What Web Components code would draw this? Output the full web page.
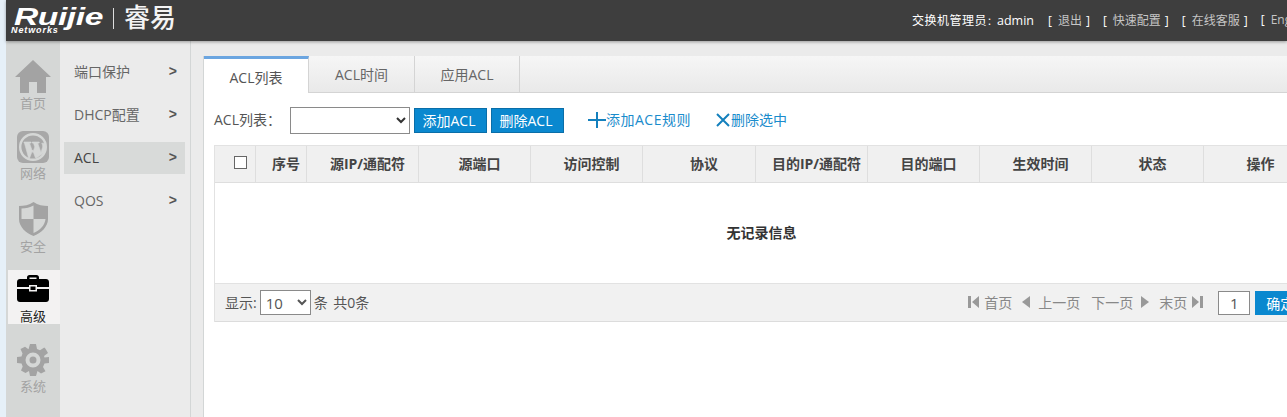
<!DOCTYPE html>
<html lang="zh">
<head>
<meta charset="utf-8">
<title>ACL</title>
<style>
html, body { margin: 0; height: 100%; overflow: hidden; background: #e6f0f8; }
body { font: 14px "Open Sans", "Noto Sans CJK SC", sans-serif; color: #555; }
</style>
</head>
<body>
<rj-app>
  <rj-header slot="header"></rj-header>
  <rj-rail slot="rail"></rj-rail>
  <rj-submenu slot="submenu"></rj-submenu>
  <rj-tabs></rj-tabs>
  <rj-toolbar></rj-toolbar>
  <rj-table></rj-table>
</rj-app>

<script>
const FONT = '"Open Sans", "Noto Sans CJK SC", sans-serif';

class RjApp extends HTMLElement {
  constructor() {
    super();
    this.attachShadow({mode: 'open'});
    this.shadowRoot.innerHTML = `
<style>
:host { display: block; height: 417px; padding-left: 6px; box-sizing: border-box; overflow: hidden; }
.shell { display: grid; grid-template-columns: 54px 130px 1fr; grid-template-rows: 41px 1fr; height: 417px; width: 1281px; }
.top { grid-column: 1 / -1; }
.main { background: #ebebeb; padding: 15px 0 0 12px; border-left: 1px solid #d3d6d6; min-width: 0; overflow: hidden; }
.page { background: #fff; border-left: 1px solid #d3d6d6; height: 100%; overflow: hidden; }
</style>
<div class="shell">
  <div class="top"><slot name="header"></slot></div>
  <slot name="rail"></slot>
  <slot name="submenu"></slot>
  <div class="main"><div class="page"><slot></slot></div></div>
</div>`;
  }
}

class RjHeader extends HTMLElement {
  constructor() {
    super();
    this.attachShadow({mode: 'open'});
    this.shadowRoot.innerHTML = `
<style>
:host { display: block; height: 41px; background: #3e3e3e; box-shadow: 0 1px 3px rgba(0,0,0,.35); position: relative; z-index: 2; overflow: hidden; color: #fff; font-family: ${FONT}; }
.bar { display: flex; align-items: center; height: 41px; width: 1400px; }
.logo { flex: none; width: 906px; display: flex; align-items: flex-start; height: 41px; box-sizing: border-box; padding-left: 5px; }
.mark { position: relative; width: 101px; height: 41px; }
.word { position: absolute; left: 3px; top: 7px; font: italic bold 24px/19px "Liberation Sans", sans-serif; letter-spacing: -.3px; color: #fff; transform: scaleX(1.4); transform-origin: 0 50%; }
.net { position: absolute; left: 0; top: 26px; font: italic bold 9px/8px "Liberation Sans", sans-serif; letter-spacing: .9px; color: #fff; }
.sep { width: 1px; height: 21px; background: #ddd; margin: 8px 0 0 1px; }
.brand { font: 500 26px/30px "Noto Sans CJK SC", sans-serif; margin: 1px 0 0 10px; color: #f4f4f4; }
.user { flex: none; font-size: 12px; display: flex; gap: 13px; white-space: nowrap; padding-bottom: 2px; }
.admin { margin-right: 1px; letter-spacing: .5px; }
.admin i { font-style: normal; font-size: 10px; letter-spacing: 0; }
.admin em { font-style: normal; font-size: 12.5px; letter-spacing: 0; }
a { color: #fff; }
a b { font-weight: 400; color: #c6c6c6; padding: 0 4px 0 6px; }
</style>
<div class="bar">
  <div class="logo">
    <div class="mark"><span class="word">Ruijie</span><span class="net">Networks</span></div>
    <div class="sep"></div>
    <div class="brand">睿易</div>
  </div>
  <div class="user">
    <span class="admin">交换机管理员<i>：</i><em>admin</em></span>
    <a>[<b>退出</b>]</a>
    <a>[<b>快速配置</b>]</a>
    <a>[<b>在线客服</b>]</a>
    <a>[<b>English</b>]</a>
  </div>
</div>`;
  }
}

const RAIL_ICONS = {
  home: '<svg width="36" height="33" viewBox="0 0 36 33"><path fill="currentColor" d="M18 0 36 17H31V33H22V22H14V33H5V17H0Z"/></svg>',
  wp: `<svg width="32" height="32" viewBox="0 0 32 32"><rect width="32" height="32" rx="6" fill="#a8a8a8"/><circle cx="16" cy="16" r="12.800" fill="none" stroke="#d5d7d6" stroke-width="2.400"/><path fill="#d5d7d6" stroke="#d5d7d6" stroke-width=".6" d="M7 11h7v1l-1.500.2 3.300 9.300 2-5.600-1.300-3.700-1.300-.2v-1h7v1l-1.500.2 3.300 9.300 1.500-5c.6-2-.2-3.300-.8-4.300h3c1.500 3 1 6-.3 9.300L19.500 27h-1L15.600 19l-3 8h-1L7.500 12.200 7 12z"/></svg>`,
  shield: '<svg width="29" height="34" viewBox="0 0 29 34"><path fill="currentColor" d="M14.500 0C19 3 24 4 29 4V17C29 25 22 31 14.500 34 7 31 0 25 0 17V4C5 4 10 3 14.500 0Z"/><path fill="#d5d7d6" d="M14.500 3.500V17H2.500V6.500C7 6.300 11 5.500 14.500 3.500ZM14.500 17H26.500C26 23.500 20.500 28.500 14.500 31Z"/></svg>',
  case: '<svg width="32" height="27" viewBox="0 0 32 27"><path fill="#000" d="M10 4V2.500C10 1 11 0 12.500 0H19.500C21 0 22 1 22 2.500V4H29C30.700 4 32 5.300 32 7V12H20V10H12V12H0V7C0 5.300 1.300 4 3 4ZM12.500 2.500V4H19.500V2.500ZM0 14H12V16.500H20V14H32V24C32 25.700 30.700 27 29 27H3C1.300 27 0 25.700 0 24ZM13.500 11.500H18.500V15H13.500Z"/></svg>',
  gear: '<svg width="32" height="32" viewBox="0 0 32 32"><path fill="currentColor" fill-rule="evenodd" d="M13 0H19L20 5 23 6.300 27.300 3.600 28.500 4.800 31 9 27 12 27.500 13.500 32 13V19L27.500 19.500 26 23 28.500 27.300 24 29.500 20.500 27 19 32H13L12 27 8.500 29 4 26.500 5.700 22.500 4.500 19.500 0 19V13L4.500 12.500 5.500 9.500 3.500 5 8 2.700 11.500 5.300ZM16 8.500A7.500 7.500 0 1 0 16 23.500 7.500 7.500 0 1 0 16 8.500ZM16 12.500A3.500 3.500 0 1 1 16 19.500 3.500 3.500 0 1 1 16 12.500Z"/></svg>'
};

class RjRail extends HTMLElement {
  constructor() {
    super();
    this.attachShadow({mode: 'open'});
    const items = [['home', '首页'], ['wp', '网络'], ['shield', '安全'], ['case', '高级', true], ['gear', '系统']];
    this.shadowRoot.innerHTML = `
<style>
:host { display: block; background: #d5d7d6; overflow: hidden; font-family: ${FONT}; }
.list { display: flex; flex-direction: column; gap: 17px; padding-top: 16px; }
.item { height: 54px; box-sizing: border-box; padding-top: 3px; display: flex; flex-direction: column; align-items: center; color: #a3a3a3; font-size: 13px; line-height: 18px; }
.item svg { display: block; }
.icon { height: 34px; margin-bottom: 1px; }
.item.on { background: #f3f2f2; color: #222; margin-left: 2px; padding: 5px 2px 0 0; }
.item.on .icon { height: 27px; margin-bottom: 5px; }
</style>
<div class="list">
${items.map(([icon, label, on]) => `<div class="item${on ? ' on' : ''}"><div class="icon">${RAIL_ICONS[icon]}</div><span>${label}</span></div>`).join('')}
</div>`;
  }
}

class RjSubmenu extends HTMLElement {
  constructor() {
    super();
    this.attachShadow({mode: 'open'});
    const items = ['端口保护', 'DHCP配置', 'ACL', 'QOS'];
    this.shadowRoot.innerHTML = `
<style>
:host { display: block; background: #ebebeb; font-family: ${FONT}; font-size: 14px; color: #666; }
ul { list-style: none; margin: 0; padding: 15px 5px 0 4px; display: flex; flex-direction: column; gap: 11px; }
li { height: 32px; box-sizing: border-box; padding: 0 8px 2px 10px; display: flex; align-items: center; justify-content: space-between; }
li.on { background: #d8dad9; color: #444; }
i { font: bold 14px "Liberation Sans", sans-serif; color: #555; }
</style>
<ul>${items.map(t => `<li class="${t === 'ACL' ? 'on' : ''}"><span>${t}</span><i>&gt;</i></li>`).join('')}</ul>`;
  }
}

class RjTabs extends HTMLElement {
  constructor() {
    super();
    this.attachShadow({mode: 'open'});
    this.shadowRoot.innerHTML = `
<style>
:host { display: block; font-family: ${FONT}; font-size: 14px; color: #666; }
.tabs { display: flex; height: 37px; box-sizing: border-box; background: linear-gradient(#f6f6f6, #e9e9e9); border-bottom: 1px solid #d4d4d4; }
.tab { width: 105px; box-sizing: border-box; border-right: 1px solid #d4d4d4; text-align: center; line-height: 37px; }
.tab:nth-child(2) { width: 106px; }
.tab.on { background: #fff; border-top: 3px solid #6ba5e0; height: 37px; line-height: 38px; color: #555; }
</style>
<div class="tabs">
  <div class="tab on">ACL列表</div>
  <div class="tab">ACL时间</div>
  <div class="tab">应用ACL</div>
</div>`;
  }
}

class RjToolbar extends HTMLElement {
  constructor() {
    super();
    this.attachShadow({mode: 'open'});
    this.shadowRoot.innerHTML = `
<style>
:host { display: block; font-family: ${FONT}; font-size: 14px; color: #555; padding: 14px 0 0 10px; height: 52px; box-sizing: border-box; }
.row { display: flex; align-items: center; height: 27px; }
.label { width: 76px; padding-bottom: 3px; }
select { width: 120px; height: 27px; background: #fff; border: 1px solid #8a8a8a; border-radius: 0; margin-right: 4px; padding: 0; font: inherit; color: #333; }
button { width: 73px; height: 25px; padding: 0 3px 2px 0; margin-right: 4px; background: #0a88cf; border: 1px solid #0a6ea8; color: #fff; font: inherit; border-radius: 0; }
.act { display: flex; align-items: center; color: #1a8ccc; margin-left: 20px; letter-spacing: .5px; padding-bottom: 3px; }
.act + .act { margin-left: 24px; letter-spacing: 0; }
.act svg { display: block; flex: none; margin-top: 2px; }
</style>
<div class="row">
  <span class="label">ACL列表：</span>
  <select></select>
  <button>添加ACL</button>
  <button>删除ACL</button>
  <span class="act"><svg width="18" height="16" viewBox="0 0 18 16"><path fill="#1480bd" d="M8 0h2v7h8v2h-8v7H8V9H0V7h8z"/></svg>添加ACE规则</span>
  <span class="act"><svg width="16" height="14" viewBox="0 0 16 14"><path fill="none" stroke="#1480bd" stroke-width="2" d="M2 1 14 13M14 1 2 13"/></svg>删除选中</span>
</div>`;
  }
}

class RjPager extends HTMLElement {
  constructor() {
    super();
    this.attachShadow({mode: 'open'});
    const tri = (dir, bar) => `<svg width="${bar ? 11 : 8}" height="12" viewBox="0 0 ${bar ? 11 : 8} 12"><path fill="#999" d="${
      dir === 'l' ? (bar ? 'M0 0H3V12H0ZM11 0V12L4 6Z' : 'M8 0V12L0 6Z') : (bar ? 'M0 0 7 6 0 12ZM8 0H11V12H8Z' : 'M0 0 8 6 0 12Z')}"/></svg>`;
    this.shadowRoot.innerHTML = `
<style>
:host { display: block; height: 39px; box-sizing: border-box; background: #f1f1f1; border-top: 1px solid #e2e2e2; border-bottom: 1px solid #dcdcdc; font-family: ${FONT}; font-size: 14px; color: #555; }
.bar { display: flex; align-items: center; height: 37px; padding-left: 10px; width: 1100px; box-sizing: border-box; }
.txt { padding-bottom: 2px; }
.txt.count { word-spacing: 2px; }
select { width: 51px; height: 25px; margin: 0 3px 0 3px; background: #fff; border: 1px solid #8a8a8a; border-radius: 0; padding: 0 0 0 1px; font: inherit; font-size: 15px; color: #555; }
.nav { display: flex; align-items: center; color: #888; margin-left: 599px; white-space: nowrap; padding-bottom: 1px; }
.nav svg { display: block; }
.nav span { display: flex; align-items: center; gap: 8px; }
.nav span:first-child, .nav span:last-child { gap: 5px; }
.nav span:nth-child(2) { margin-left: 10px; }
.nav span:nth-child(3) { margin-left: 11px; }
.nav span:nth-child(4) { margin-left: 10px; }
input { width: 32px; height: 24px; box-sizing: border-box; margin-left: 15px; text-align: center; border: 1px solid #8a8a8a; background: #fff; padding: 0; font: inherit; font-size: 15px; color: #555; }
button { width: 50px; height: 24px; margin-left: 5px; padding: 0; background: #0a88cf; border: 0; color: #fff; font: inherit; flex: none; }
</style>
<div class="bar">
  <span class="txt">显示:</span>
  <select><option>10</option></select>
  <span class="txt count">条 共0条</span>
  <div class="nav">
    <span>${tri('l', true)}首页</span>
    <span>${tri('l')}上一页</span>
    <span>下一页${tri('r')}</span>
    <span>末页${tri('r', true)}</span>
  </div>
  <input value="1">
  <button>确定</button>
</div>`;
  }
}

class RjTable extends HTMLElement {
  constructor() {
    super();
    this.attachShadow({mode: 'open'});
    const cols = ['序号', '源IP/通配符', '源端口', '访问控制', '协议', '目的IP/通配符', '目的端口', '生效时间', '状态', '操作'];
    this.shadowRoot.innerHTML = `
<style>
:host { display: block; margin-left: 10px; width: 1090px; font-family: ${FONT}; font-size: 14px; color: #333; border-left: 1px solid #e2e2e2; box-sizing: border-box; }
.head { display: grid; grid-template-columns: 41px 51px 112px 112px 112px 113px 112px 112px 112px 112px 112px; height: 38px; box-sizing: border-box; background: #f0f0f0; border-top: 1px solid #e2e2e2; border-bottom: 1px solid #dedede; }
.head > div { display: flex; align-items: center; justify-content: center; border-right: 1px solid #dedede; font-weight: 700; color: #444; padding: 0 0 3px 10px; min-width: 0; white-space: nowrap; }
.head > div:last-child { padding-left: 2px; }
.check { width: 13px; height: 13px; box-sizing: border-box; border: 1px solid #666; background: #fff; margin-top: -1px; }
.empty { height: 100px; display: flex; align-items: center; justify-content: center; font-weight: 700; background: #fff; box-sizing: border-box; padding: 0 0 3px 4px; }
</style>
<div class="head">
  <div><span class="check"></span></div>
  ${cols.map(c => `<div>${c}</div>`).join('')}
</div>
<div class="empty">无记录信息</div>
<rj-pager></rj-pager>`;
  }
}

customElements.define('rj-pager', RjPager);
customElements.define('rj-table', RjTable);
customElements.define('rj-toolbar', RjToolbar);
customElements.define('rj-tabs', RjTabs);
customElements.define('rj-submenu', RjSubmenu);
customElements.define('rj-rail', RjRail);
customElements.define('rj-header', RjHeader);
customElements.define('rj-app', RjApp);
</script>
</body>
</html>
